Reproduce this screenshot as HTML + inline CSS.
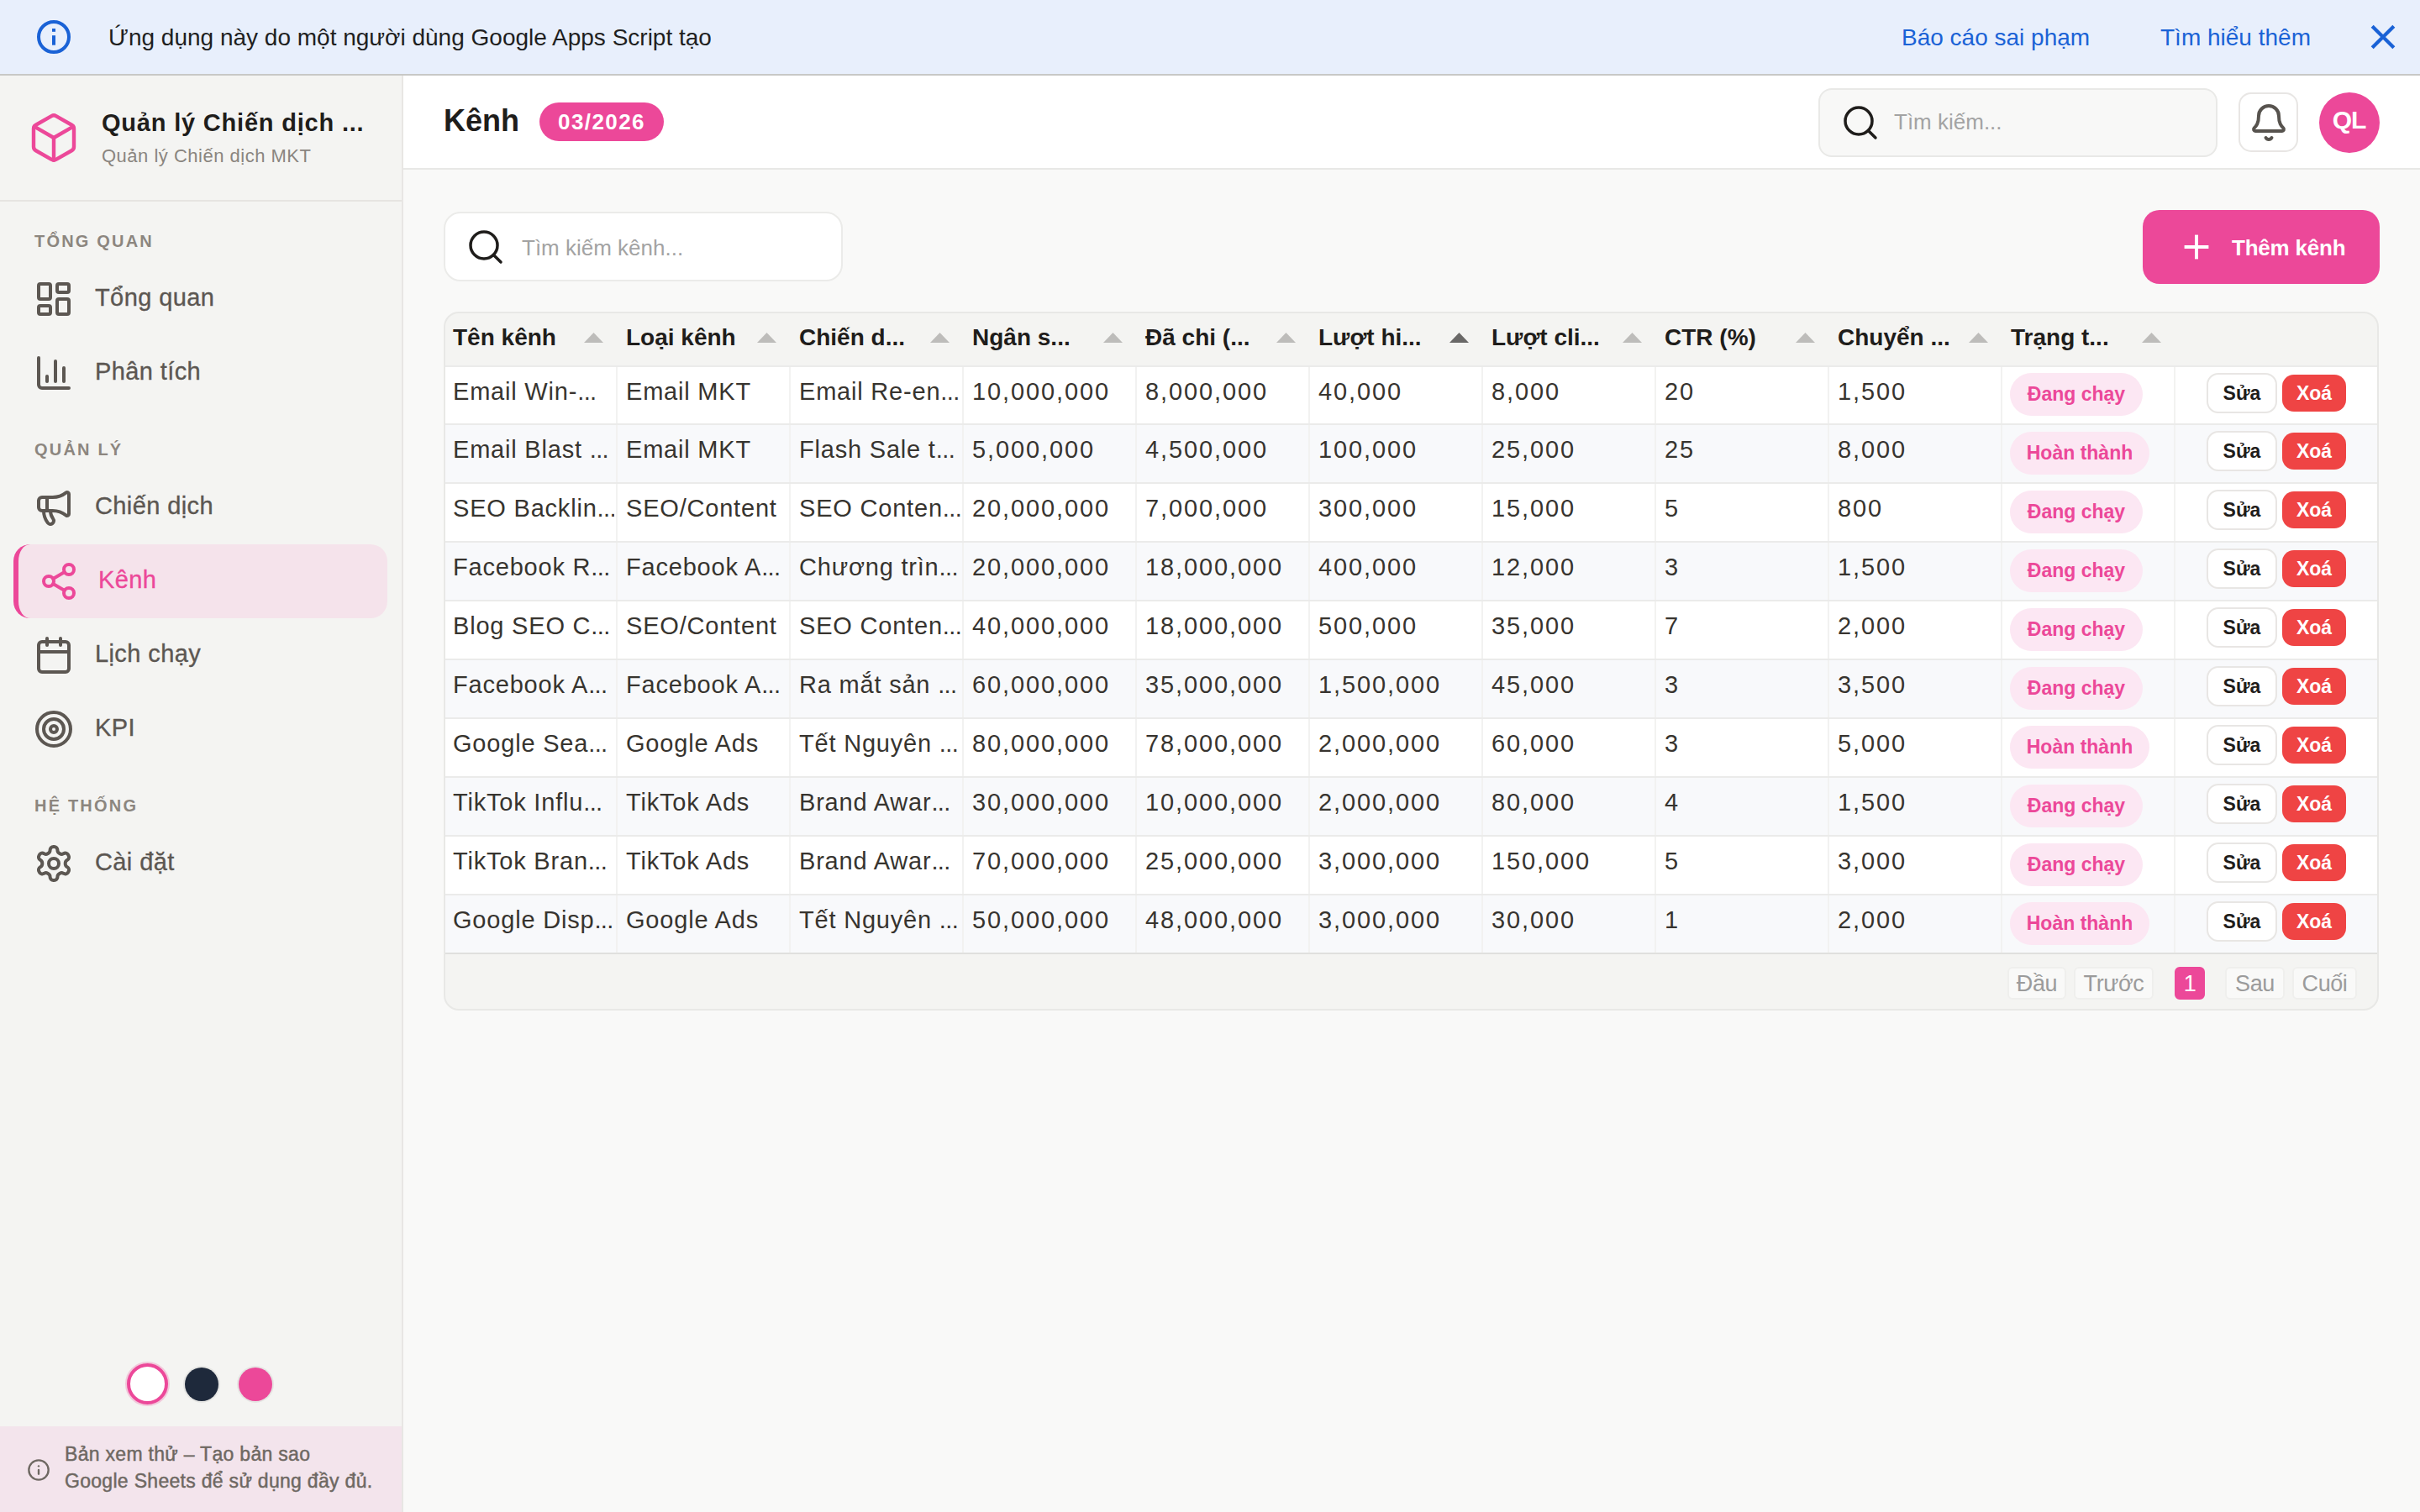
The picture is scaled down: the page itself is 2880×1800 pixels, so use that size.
<!DOCTYPE html>
<html><head><meta charset="utf-8"><title>Kênh</title><style>
*{box-sizing:border-box;margin:0;padding:0}
html,body{width:2880px;height:1800px;overflow:hidden;background:#f9f9f8;font-family:"Liberation Sans",sans-serif}
body{position:relative}
@media (max-width:2000px){html{zoom:0.5}}
.abs{position:absolute}
svg{display:block}
.t{position:absolute;white-space:nowrap}
#banner{position:absolute;left:0;top:0;width:2880px;height:90px;background:#e8effc;border-bottom:2px solid #c8c8c6}
#side{position:absolute;left:0;top:90px;width:480px;height:1710px;background:#f4f4f2;border-right:2px solid #e8e6e4}
#header{position:absolute;left:480px;top:90px;width:2400px;height:112px;background:#fff;border-bottom:2px solid #e8e8e6}
.sec{font-size:20px;line-height:24px;font-weight:700;letter-spacing:2.2px;color:#8c867f}
.navt{font-size:29px;line-height:36px;letter-spacing:0.4px;color:#5c5752;-webkit-text-stroke:0.35px #5c5752}
.th{font-size:28px;line-height:36px;font-weight:700;color:#1f1d1b}
.td{font-size:29px;line-height:36px;letter-spacing:0.8px;color:#37342f}
.el{letter-spacing:-0.6px}
.pill{position:absolute;height:51px;border-radius:26px;background:#fce7f3;color:#ec4899;font-size:23px;font-weight:700;line-height:51px;text-align:center;white-space:nowrap}
.btn-e{position:absolute;height:48px;border:2px solid #e8e6e4;border-radius:14px;background:#fff;color:#1f1d1b;font-size:23px;font-weight:700;line-height:44px;text-align:center}
.btn-d{position:absolute;height:44px;border-radius:14px;background:#ef4444;color:#fff;font-size:23px;font-weight:700;line-height:44px;text-align:center}
.pg{position:absolute;top:1151px;height:39px;border:2px solid #efefed;border-radius:6px;background:#f9f9f8;color:#9b9b9b;font-size:27px;letter-spacing:-0.4px;line-height:37px;text-align:center}
</style></head><body>
<div id="banner"></div>
<svg class="abs" style="left:40px;top:20px" width="48" height="48" viewBox="0 0 24 24" fill="none" stroke="#1a62d6" stroke-width="2"><circle cx="12" cy="12" r="9"/><rect x="11" y="11.1" width="2" height="5.75" fill="#1a62d6" stroke="none"/><rect x="11" y="7" width="2" height="1.9" fill="#1a62d6" stroke="none"/></svg>
<div class="t" style="left:129px;top:25.1px;font-size:28px;line-height:40px;color:#1f1f1f">Ứng dụng này do một người dùng Google Apps Script tạo</div>
<div class="t" style="left:2263px;top:25.1px;font-size:28px;line-height:40px;color:#1a62d6">Báo cáo sai phạm</div>
<div class="t" style="left:2571px;top:25.1px;font-size:28px;line-height:40px;color:#1a62d6">Tìm hiểu thêm</div>
<svg class="abs" style="left:2814px;top:22px" width="44" height="44" viewBox="0 0 24 24" fill="none" stroke="#1a62d6" stroke-width="2.3"><path d="M5 5l14 14M19 5L5 19"/></svg>
<div id="side"></div>
<svg class="abs" style="left:32px;top:132px" width="64" height="64" viewBox="0 0 24 24" fill="none" stroke="#ec4899" stroke-width="1.65" stroke-linecap="round" stroke-linejoin="round"><path d="M21 8a2 2 0 0 0-1-1.73l-7-4a2 2 0 0 0-2 0l-7 4A2 2 0 0 0 3 8v8a2 2 0 0 0 1 1.73l7 4a2 2 0 0 0 2 0l7-4A2 2 0 0 0 21 16Z"/><path d="m3.3 7 8.7 5 8.7-5"/><path d="M12 22V12"/></svg>
<div class="t" style="left:121px;top:127.5px;font-size:29px;line-height:36px;font-weight:700;letter-spacing:0.8px;color:#1f1d1b">Quản lý Chiến dịch ...</div>
<div class="t" style="left:121px;top:172.4px;font-size:22px;line-height:28px;letter-spacing:0.5px;color:#8a857f">Quản lý Chiến dịch MKT</div>
<div class="abs" style="left:0;top:238px;width:478px;height:2px;background:#e6e4e1"></div>
<div class="t sec" style="left:41px;top:275.1px">TỔNG QUAN</div>
<div class="t sec" style="left:41px;top:523.1px">QUẢN LÝ</div>
<div class="t sec" style="left:41px;top:947.1px">HỆ THỐNG</div>
<svg class="abs" style="left:40px;top:332px" width="48" height="48" viewBox="0 0 24 24" fill="none" stroke="#5c5752" stroke-width="2" stroke-linecap="round" stroke-linejoin="round"><rect width="7" height="9" x="3" y="3" rx="1"/><rect width="7" height="5" x="14" y="3" rx="1"/><rect width="7" height="9" x="14" y="12" rx="1"/><rect width="7" height="5" x="3" y="16" rx="1"/></svg>
<div class="t navt" style="left:113px;top:336.0px">Tổng quan</div>
<svg class="abs" style="left:40px;top:420px" width="48" height="48" viewBox="0 0 24 24" fill="none" stroke="#5c5752" stroke-width="2" stroke-linecap="round" stroke-linejoin="round"><path d="M3 3v16a2 2 0 0 0 2 2h16"/><path d="M18 17V9"/><path d="M13 17V5"/><path d="M8 17v-3"/></svg>
<div class="t navt" style="left:113px;top:424.0px">Phân tích</div>
<svg class="abs" style="left:40px;top:580px" width="48" height="48" viewBox="0 0 24 24" fill="none" stroke="#5c5752" stroke-width="2" stroke-linecap="round" stroke-linejoin="round"><path d="M11 6a13 13 0 0 0 8.4-2.8A1 1 0 0 1 21 4v12a1 1 0 0 1-1.6.8A13 13 0 0 0 11 14H5a2 2 0 0 1-2-2V8a2 2 0 0 1 2-2z"/><path d="M6 14a12 12 0 0 0 2.4 7.2 2 2 0 0 0 3.2-2.4A8 8 0 0 1 10 14"/><path d="M8 6v8"/></svg>
<div class="t navt" style="left:113px;top:584.0px">Chiến dịch</div>
<div class="abs" style="left:16px;top:648px;width:445px;height:88px;background:#f5e3eb;border-radius:20px;border-left:6px solid #ec4899"></div>
<svg class="abs" style="left:46px;top:668px" width="48" height="48" viewBox="0 0 24 24" fill="none" stroke="#ec4899" stroke-width="2" stroke-linecap="round" stroke-linejoin="round"><circle cx="18" cy="5" r="3"/><circle cx="6" cy="12" r="3"/><circle cx="18" cy="19" r="3"/><line x1="8.59" x2="15.42" y1="13.51" y2="17.49"/><line x1="15.41" x2="8.59" y1="6.51" y2="10.49"/></svg>
<div class="t navt" style="left:117px;top:672.0px;color:#ec4899;-webkit-text-stroke:0.35px #ec4899">Kênh</div>
<svg class="abs" style="left:40px;top:756px" width="48" height="48" viewBox="0 0 24 24" fill="none" stroke="#5c5752" stroke-width="2" stroke-linecap="round" stroke-linejoin="round"><path d="M8 2v4"/><path d="M16 2v4"/><rect width="18" height="18" x="3" y="4" rx="2"/><path d="M3 10h18"/></svg>
<div class="t navt" style="left:113px;top:760.0px">Lịch chạy</div>
<svg class="abs" style="left:40px;top:844px" width="48" height="48" viewBox="0 0 24 24" fill="none" stroke="#5c5752" stroke-width="2" stroke-linecap="round" stroke-linejoin="round"><circle cx="12" cy="12" r="10"/><circle cx="12" cy="12" r="6"/><circle cx="12" cy="12" r="2"/></svg>
<div class="t navt" style="left:113px;top:848.0px">KPI</div>
<svg class="abs" style="left:40px;top:1004px" width="48" height="48" viewBox="0 0 24 24" fill="none" stroke="#5c5752" stroke-width="2" stroke-linecap="round" stroke-linejoin="round"><path d="M12.22 2h-.44a2 2 0 0 0-2 2v.18a2 2 0 0 1-1 1.73l-.43.25a2 2 0 0 1-2 0l-.15-.08a2 2 0 0 0-2.73.73l-.22.38a2 2 0 0 0 .73 2.73l.15.1a2 2 0 0 1 1 1.72v.51a2 2 0 0 1-1 1.74l-.15.09a2 2 0 0 0-.73 2.730l.22.38a2 2 0 0 0 2.73.73l.15-.08a2 2 0 0 1 2 0l.43.25a2 2 0 0 1 1 1.73V20a2 2 0 0 0 2 2h.44a2 2 0 0 0 2-2v-.18a2 2 0 0 1 1-1.73l.43-.25a2 2 0 0 1 2 0l.15.08a2 2 0 0 0 2.73-.73l.22-.39a2 2 0 0 0-.73-2.73l-.15-.08a2 2 0 0 1-1-1.74v-.5a2 2 0 0 1 1-1.74l.15-.09a2 2 0 0 0 .73-2.73l-.22-.38a2 2 0 0 0-2.73-.73l-.15.08a2 2 0 0 1-2 0l-.43-.25a2 2 0 0 1-1-1.73V4a2 2 0 0 0-2-2z"/><circle cx="12" cy="12" r="3"/></svg>
<div class="t navt" style="left:113px;top:1008.0px">Cài đặt</div>
<div class="abs" style="left:151px;top:1623px;width:49px;height:49px;border-radius:50%;background:#fff;border:4px solid #ec4899;box-shadow:0 0 0 2px rgba(236,72,153,0.25)"></div>
<div class="abs" style="left:220px;top:1628px;width:40px;height:40px;border-radius:50%;background:#1e293b;box-shadow:0 0 0 2px rgba(0,0,0,0.06)"></div>
<div class="abs" style="left:284px;top:1628px;width:40px;height:40px;border-radius:50%;background:#ec4899;box-shadow:0 0 0 2px rgba(0,0,0,0.06)"></div>
<div class="abs" style="left:0;top:1698px;width:478px;height:102px;background:#f3e4ec"></div>
<svg class="abs" style="left:32px;top:1736px" width="28" height="28" viewBox="0 0 24 24" fill="none" stroke="#6e6862" stroke-width="2" stroke-linecap="round" stroke-linejoin="round"><circle cx="12" cy="12" r="10"/><path d="M12 16v-4"/><path d="M12 8h.01"/></svg>
<div class="t" style="left:77px;top:1715.4px;font-size:23px;line-height:32px;letter-spacing:0.3px;color:#6e6862;-webkit-text-stroke:0.45px #6e6862">Bản xem thử – Tạo bản sao<br>Google Sheets để sử dụng đầy đủ.</div>
<div id="header"></div>
<div class="t" style="left:528px;top:121.8px;font-size:36px;line-height:44px;font-weight:700;color:#1f1d1b">Kênh</div>
<div class="abs" style="left:642px;top:122px;width:148px;height:46px;border-radius:23px;background:#ec4899"></div>
<div class="t" style="left:642px;width:148px;text-align:center;top:128.7px;font-size:26px;line-height:32px;font-weight:700;letter-spacing:1.4px;color:#fff">03/2026</div>
<div class="abs" style="left:2164px;top:105px;width:475px;height:82px;border-radius:16px;background:#f8f8f7;border:2px solid #e9e9e7"></div>
<svg class="abs" style="left:2190px;top:122px" width="48" height="48" viewBox="0 0 24 24" fill="none" stroke="#1f1d1b" stroke-width="1.75" stroke-linecap="round" stroke-linejoin="round"><circle cx="11" cy="11" r="8"/><path d="m21 21-4.3-4.3"/></svg>
<div class="t" style="left:2254px;top:129.0px;font-size:26px;line-height:32px;color:#a3a3a3">Tìm kiếm...</div>
<div class="abs" style="left:2664px;top:110px;width:71px;height:71px;border-radius:15px;background:#fff;border:2px solid #e8e6e4"></div>
<svg class="abs" style="left:2676px;top:122px" width="48" height="48" viewBox="0 0 24 24" fill="none" stroke="#57534e" stroke-width="2" stroke-linecap="round" stroke-linejoin="round"><path d="M10.268 21a2 2 0 0 0 3.464 0"/><path d="M3.262 15.326A1 1 0 0 0 4 17h16a1 1 0 0 0 .74-1.673C19.41 13.956 18 12.499 18 8A6 6 0 0 0 6 8c0 4.499-1.411 5.956-2.738 7.326"/></svg>
<div class="abs" style="left:2760px;top:110px;width:72px;height:72px;border-radius:50%;background:#ec4899"></div>
<div class="t" style="left:2760px;width:72px;text-align:center;top:126.8px;font-size:30px;line-height:32px;font-weight:700;letter-spacing:-1px;text-indent:-1px;color:#fff">QL</div>
<div class="abs" style="left:528px;top:252px;width:475px;height:83px;border-radius:20px;background:#fff;border:2px solid #ebebe9"></div>
<svg class="abs" style="left:554px;top:270px" width="48" height="48" viewBox="0 0 24 24" fill="none" stroke="#1f1d1b" stroke-width="1.75" stroke-linecap="round" stroke-linejoin="round"><circle cx="11" cy="11" r="8"/><path d="m21 21-4.3-4.3"/></svg>
<div class="t" style="left:621px;top:278.7px;font-size:26px;line-height:32px;color:#a3a3a3">Tìm kiếm kênh...</div>
<div class="abs" style="left:2550px;top:250px;width:282px;height:88px;border-radius:20px;background:#ec4899"></div>
<svg class="abs" style="left:2590px;top:270px" width="48" height="48" viewBox="0 0 24 24" fill="none" stroke="#fff" stroke-width="2"><path d="M4.8 12h14.4"/><path d="M12 4.8v14.4"/></svg>
<div class="t" style="left:2656px;top:278.7px;font-size:26px;line-height:32px;font-weight:700;letter-spacing:-0.2px;color:#fff">Thêm kênh</div>
<div class="abs" style="left:528px;top:371px;width:2303px;height:832px;border-radius:18px;background:#f4f4f2;border:2px solid #e8e8e6;overflow:hidden">
<div class="t th" style="left:9.0px;top:11.4px">Tên kênh</div>
<svg class="abs" style="left:164.5px;top:23px" width="23" height="12" viewBox="0 0 23 12"><path d="M11.5 0L23 12H0z" fill="#bdbcba"/></svg>
<div class="t th" style="left:215.0px;top:11.4px">Loại kênh</div>
<svg class="abs" style="left:370.5px;top:23px" width="23" height="12" viewBox="0 0 23 12"><path d="M11.5 0L23 12H0z" fill="#bdbcba"/></svg>
<div class="t th" style="left:421.0px;top:11.4px">Chiến d...</div>
<svg class="abs" style="left:576.5px;top:23px" width="23" height="12" viewBox="0 0 23 12"><path d="M11.5 0L23 12H0z" fill="#bdbcba"/></svg>
<div class="t th" style="left:627.0px;top:11.4px">Ngân s...</div>
<svg class="abs" style="left:782.5px;top:23px" width="23" height="12" viewBox="0 0 23 12"><path d="M11.5 0L23 12H0z" fill="#bdbcba"/></svg>
<div class="t th" style="left:833.0px;top:11.4px">Đã chi (...</div>
<svg class="abs" style="left:988.5px;top:23px" width="23" height="12" viewBox="0 0 23 12"><path d="M11.5 0L23 12H0z" fill="#bdbcba"/></svg>
<div class="t th" style="left:1039.0px;top:11.4px">Lượt hi...</div>
<svg class="abs" style="left:1194.5px;top:23px" width="23" height="12" viewBox="0 0 23 12"><path d="M11.5 0L23 12H0z" fill="#696867"/></svg>
<div class="t th" style="left:1245.0px;top:11.4px">Lượt cli...</div>
<svg class="abs" style="left:1400.5px;top:23px" width="23" height="12" viewBox="0 0 23 12"><path d="M11.5 0L23 12H0z" fill="#bdbcba"/></svg>
<div class="t th" style="left:1451.0px;top:11.4px">CTR (%)</div>
<svg class="abs" style="left:1606.5px;top:23px" width="23" height="12" viewBox="0 0 23 12"><path d="M11.5 0L23 12H0z" fill="#bdbcba"/></svg>
<div class="t th" style="left:1657.0px;top:11.4px">Chuyển ...</div>
<svg class="abs" style="left:1812.5px;top:23px" width="23" height="12" viewBox="0 0 23 12"><path d="M11.5 0L23 12H0z" fill="#bdbcba"/></svg>
<div class="t th" style="left:1863.0px;top:11.4px">Trạng t...</div>
<svg class="abs" style="left:2018.5px;top:23px" width="23" height="12" viewBox="0 0 23 12"><path d="M11.5 0L23 12H0z" fill="#bdbcba"/></svg>
<div class="abs" style="left:0;top:61.50px;width:2299px;height:69.94px;background:#ffffff;border-top:2px solid #ebebea"></div>
<div class="t td" style="left:9.0px;top:74.5px;width:192.0px;overflow:hidden;">Email Win-<span class=el>...</span></div>
<div class="abs" style="left:203.0px;top:63.50px;width:2px;height:67.94px;background:#f2f2f1"></div>
<div class="t td" style="left:215.0px;top:74.5px;width:192.0px;overflow:hidden;">Email MKT</div>
<div class="abs" style="left:409.0px;top:63.50px;width:2px;height:67.94px;background:#f2f2f1"></div>
<div class="t td" style="left:421.0px;top:74.5px;width:192.0px;overflow:hidden;">Email Re-en<span class=el>...</span></div>
<div class="abs" style="left:615.0px;top:63.50px;width:2px;height:67.94px;background:#f2f2f1"></div>
<div class="t td" style="left:627.0px;top:74.5px;width:192.0px;overflow:hidden;letter-spacing:1.9px;">10,000,000</div>
<div class="abs" style="left:821.0px;top:63.50px;width:2px;height:67.94px;background:#f2f2f1"></div>
<div class="t td" style="left:833.0px;top:74.5px;width:192.0px;overflow:hidden;letter-spacing:1.9px;">8,000,000</div>
<div class="abs" style="left:1027.0px;top:63.50px;width:2px;height:67.94px;background:#f2f2f1"></div>
<div class="t td" style="left:1039.0px;top:74.5px;width:192.0px;overflow:hidden;letter-spacing:1.9px;">40,000</div>
<div class="abs" style="left:1233.0px;top:63.50px;width:2px;height:67.94px;background:#f2f2f1"></div>
<div class="t td" style="left:1245.0px;top:74.5px;width:192.0px;overflow:hidden;letter-spacing:1.9px;">8,000</div>
<div class="abs" style="left:1439.0px;top:63.50px;width:2px;height:67.94px;background:#f2f2f1"></div>
<div class="t td" style="left:1451.0px;top:74.5px;width:192.0px;overflow:hidden;letter-spacing:1.9px;">20</div>
<div class="abs" style="left:1645.0px;top:63.50px;width:2px;height:67.94px;background:#f2f2f1"></div>
<div class="t td" style="left:1657.0px;top:74.5px;width:192.0px;overflow:hidden;letter-spacing:1.9px;">1,500</div>
<div class="abs" style="left:1851.0px;top:63.50px;width:2px;height:67.94px;background:#f2f2f1"></div>
<div class="abs" style="left:2057.0px;top:63.50px;width:2px;height:67.94px;background:#f2f2f1"></div>
<div class="pill" style="left:1862.0px;top:71.0px;width:158px">Đang chạy</div>
<div class="btn-e" style="left:2096px;top:70.5px;width:84px">Sửa</div>
<div class="btn-d" style="left:2186px;top:72.5px;width:76px">Xoá</div>
<div class="abs" style="left:0;top:131.44px;width:2299px;height:69.94px;background:#f8f9fb;border-top:2px solid #ebebea"></div>
<div class="t td" style="left:9.0px;top:144.4px;width:192.0px;overflow:hidden;">Email Blast <span class=el>...</span></div>
<div class="abs" style="left:203.0px;top:133.44px;width:2px;height:67.94px;background:#f2f2f1"></div>
<div class="t td" style="left:215.0px;top:144.4px;width:192.0px;overflow:hidden;">Email MKT</div>
<div class="abs" style="left:409.0px;top:133.44px;width:2px;height:67.94px;background:#f2f2f1"></div>
<div class="t td" style="left:421.0px;top:144.4px;width:192.0px;overflow:hidden;">Flash Sale t<span class=el>...</span></div>
<div class="abs" style="left:615.0px;top:133.44px;width:2px;height:67.94px;background:#f2f2f1"></div>
<div class="t td" style="left:627.0px;top:144.4px;width:192.0px;overflow:hidden;letter-spacing:1.9px;">5,000,000</div>
<div class="abs" style="left:821.0px;top:133.44px;width:2px;height:67.94px;background:#f2f2f1"></div>
<div class="t td" style="left:833.0px;top:144.4px;width:192.0px;overflow:hidden;letter-spacing:1.9px;">4,500,000</div>
<div class="abs" style="left:1027.0px;top:133.44px;width:2px;height:67.94px;background:#f2f2f1"></div>
<div class="t td" style="left:1039.0px;top:144.4px;width:192.0px;overflow:hidden;letter-spacing:1.9px;">100,000</div>
<div class="abs" style="left:1233.0px;top:133.44px;width:2px;height:67.94px;background:#f2f2f1"></div>
<div class="t td" style="left:1245.0px;top:144.4px;width:192.0px;overflow:hidden;letter-spacing:1.9px;">25,000</div>
<div class="abs" style="left:1439.0px;top:133.44px;width:2px;height:67.94px;background:#f2f2f1"></div>
<div class="t td" style="left:1451.0px;top:144.4px;width:192.0px;overflow:hidden;letter-spacing:1.9px;">25</div>
<div class="abs" style="left:1645.0px;top:133.44px;width:2px;height:67.94px;background:#f2f2f1"></div>
<div class="t td" style="left:1657.0px;top:144.4px;width:192.0px;overflow:hidden;letter-spacing:1.9px;">8,000</div>
<div class="abs" style="left:1851.0px;top:133.44px;width:2px;height:67.94px;background:#f2f2f1"></div>
<div class="abs" style="left:2057.0px;top:133.44px;width:2px;height:67.94px;background:#f2f2f1"></div>
<div class="pill" style="left:1862.0px;top:140.9px;width:166px">Hoàn thành</div>
<div class="btn-e" style="left:2096px;top:140.4px;width:84px">Sửa</div>
<div class="btn-d" style="left:2186px;top:142.4px;width:76px">Xoá</div>
<div class="abs" style="left:0;top:201.38px;width:2299px;height:69.94px;background:#ffffff;border-top:2px solid #ebebea"></div>
<div class="t td" style="left:9.0px;top:214.3px;width:192.0px;overflow:hidden;">SEO Backlin<span class=el>...</span></div>
<div class="abs" style="left:203.0px;top:203.38px;width:2px;height:67.94px;background:#f2f2f1"></div>
<div class="t td" style="left:215.0px;top:214.3px;width:192.0px;overflow:hidden;">SEO/Content</div>
<div class="abs" style="left:409.0px;top:203.38px;width:2px;height:67.94px;background:#f2f2f1"></div>
<div class="t td" style="left:421.0px;top:214.3px;width:192.0px;overflow:hidden;">SEO Conten<span class=el>...</span></div>
<div class="abs" style="left:615.0px;top:203.38px;width:2px;height:67.94px;background:#f2f2f1"></div>
<div class="t td" style="left:627.0px;top:214.3px;width:192.0px;overflow:hidden;letter-spacing:1.9px;">20,000,000</div>
<div class="abs" style="left:821.0px;top:203.38px;width:2px;height:67.94px;background:#f2f2f1"></div>
<div class="t td" style="left:833.0px;top:214.3px;width:192.0px;overflow:hidden;letter-spacing:1.9px;">7,000,000</div>
<div class="abs" style="left:1027.0px;top:203.38px;width:2px;height:67.94px;background:#f2f2f1"></div>
<div class="t td" style="left:1039.0px;top:214.3px;width:192.0px;overflow:hidden;letter-spacing:1.9px;">300,000</div>
<div class="abs" style="left:1233.0px;top:203.38px;width:2px;height:67.94px;background:#f2f2f1"></div>
<div class="t td" style="left:1245.0px;top:214.3px;width:192.0px;overflow:hidden;letter-spacing:1.9px;">15,000</div>
<div class="abs" style="left:1439.0px;top:203.38px;width:2px;height:67.94px;background:#f2f2f1"></div>
<div class="t td" style="left:1451.0px;top:214.3px;width:192.0px;overflow:hidden;letter-spacing:1.9px;">5</div>
<div class="abs" style="left:1645.0px;top:203.38px;width:2px;height:67.94px;background:#f2f2f1"></div>
<div class="t td" style="left:1657.0px;top:214.3px;width:192.0px;overflow:hidden;letter-spacing:1.9px;">800</div>
<div class="abs" style="left:1851.0px;top:203.38px;width:2px;height:67.94px;background:#f2f2f1"></div>
<div class="abs" style="left:2057.0px;top:203.38px;width:2px;height:67.94px;background:#f2f2f1"></div>
<div class="pill" style="left:1862.0px;top:210.9px;width:158px">Đang chạy</div>
<div class="btn-e" style="left:2096px;top:210.4px;width:84px">Sửa</div>
<div class="btn-d" style="left:2186px;top:212.4px;width:76px">Xoá</div>
<div class="abs" style="left:0;top:271.32px;width:2299px;height:69.94px;background:#f8f9fb;border-top:2px solid #ebebea"></div>
<div class="t td" style="left:9.0px;top:284.3px;width:192.0px;overflow:hidden;">Facebook R<span class=el>...</span></div>
<div class="abs" style="left:203.0px;top:273.32px;width:2px;height:67.94px;background:#f2f2f1"></div>
<div class="t td" style="left:215.0px;top:284.3px;width:192.0px;overflow:hidden;">Facebook A<span class=el>...</span></div>
<div class="abs" style="left:409.0px;top:273.32px;width:2px;height:67.94px;background:#f2f2f1"></div>
<div class="t td" style="left:421.0px;top:284.3px;width:192.0px;overflow:hidden;">Chương trìn<span class=el>...</span></div>
<div class="abs" style="left:615.0px;top:273.32px;width:2px;height:67.94px;background:#f2f2f1"></div>
<div class="t td" style="left:627.0px;top:284.3px;width:192.0px;overflow:hidden;letter-spacing:1.9px;">20,000,000</div>
<div class="abs" style="left:821.0px;top:273.32px;width:2px;height:67.94px;background:#f2f2f1"></div>
<div class="t td" style="left:833.0px;top:284.3px;width:192.0px;overflow:hidden;letter-spacing:1.9px;">18,000,000</div>
<div class="abs" style="left:1027.0px;top:273.32px;width:2px;height:67.94px;background:#f2f2f1"></div>
<div class="t td" style="left:1039.0px;top:284.3px;width:192.0px;overflow:hidden;letter-spacing:1.9px;">400,000</div>
<div class="abs" style="left:1233.0px;top:273.32px;width:2px;height:67.94px;background:#f2f2f1"></div>
<div class="t td" style="left:1245.0px;top:284.3px;width:192.0px;overflow:hidden;letter-spacing:1.9px;">12,000</div>
<div class="abs" style="left:1439.0px;top:273.32px;width:2px;height:67.94px;background:#f2f2f1"></div>
<div class="t td" style="left:1451.0px;top:284.3px;width:192.0px;overflow:hidden;letter-spacing:1.9px;">3</div>
<div class="abs" style="left:1645.0px;top:273.32px;width:2px;height:67.94px;background:#f2f2f1"></div>
<div class="t td" style="left:1657.0px;top:284.3px;width:192.0px;overflow:hidden;letter-spacing:1.9px;">1,500</div>
<div class="abs" style="left:1851.0px;top:273.32px;width:2px;height:67.94px;background:#f2f2f1"></div>
<div class="abs" style="left:2057.0px;top:273.32px;width:2px;height:67.94px;background:#f2f2f1"></div>
<div class="pill" style="left:1862.0px;top:280.8px;width:158px">Đang chạy</div>
<div class="btn-e" style="left:2096px;top:280.3px;width:84px">Sửa</div>
<div class="btn-d" style="left:2186px;top:282.3px;width:76px">Xoá</div>
<div class="abs" style="left:0;top:341.26px;width:2299px;height:69.94px;background:#ffffff;border-top:2px solid #ebebea"></div>
<div class="t td" style="left:9.0px;top:354.2px;width:192.0px;overflow:hidden;">Blog SEO C<span class=el>...</span></div>
<div class="abs" style="left:203.0px;top:343.26px;width:2px;height:67.94px;background:#f2f2f1"></div>
<div class="t td" style="left:215.0px;top:354.2px;width:192.0px;overflow:hidden;">SEO/Content</div>
<div class="abs" style="left:409.0px;top:343.26px;width:2px;height:67.94px;background:#f2f2f1"></div>
<div class="t td" style="left:421.0px;top:354.2px;width:192.0px;overflow:hidden;">SEO Conten<span class=el>...</span></div>
<div class="abs" style="left:615.0px;top:343.26px;width:2px;height:67.94px;background:#f2f2f1"></div>
<div class="t td" style="left:627.0px;top:354.2px;width:192.0px;overflow:hidden;letter-spacing:1.9px;">40,000,000</div>
<div class="abs" style="left:821.0px;top:343.26px;width:2px;height:67.94px;background:#f2f2f1"></div>
<div class="t td" style="left:833.0px;top:354.2px;width:192.0px;overflow:hidden;letter-spacing:1.9px;">18,000,000</div>
<div class="abs" style="left:1027.0px;top:343.26px;width:2px;height:67.94px;background:#f2f2f1"></div>
<div class="t td" style="left:1039.0px;top:354.2px;width:192.0px;overflow:hidden;letter-spacing:1.9px;">500,000</div>
<div class="abs" style="left:1233.0px;top:343.26px;width:2px;height:67.94px;background:#f2f2f1"></div>
<div class="t td" style="left:1245.0px;top:354.2px;width:192.0px;overflow:hidden;letter-spacing:1.9px;">35,000</div>
<div class="abs" style="left:1439.0px;top:343.26px;width:2px;height:67.94px;background:#f2f2f1"></div>
<div class="t td" style="left:1451.0px;top:354.2px;width:192.0px;overflow:hidden;letter-spacing:1.9px;">7</div>
<div class="abs" style="left:1645.0px;top:343.26px;width:2px;height:67.94px;background:#f2f2f1"></div>
<div class="t td" style="left:1657.0px;top:354.2px;width:192.0px;overflow:hidden;letter-spacing:1.9px;">2,000</div>
<div class="abs" style="left:1851.0px;top:343.26px;width:2px;height:67.94px;background:#f2f2f1"></div>
<div class="abs" style="left:2057.0px;top:343.26px;width:2px;height:67.94px;background:#f2f2f1"></div>
<div class="pill" style="left:1862.0px;top:350.8px;width:158px">Đang chạy</div>
<div class="btn-e" style="left:2096px;top:350.3px;width:84px">Sửa</div>
<div class="btn-d" style="left:2186px;top:352.3px;width:76px">Xoá</div>
<div class="abs" style="left:0;top:411.20px;width:2299px;height:69.94px;background:#f8f9fb;border-top:2px solid #ebebea"></div>
<div class="t td" style="left:9.0px;top:424.2px;width:192.0px;overflow:hidden;">Facebook A<span class=el>...</span></div>
<div class="abs" style="left:203.0px;top:413.20px;width:2px;height:67.94px;background:#f2f2f1"></div>
<div class="t td" style="left:215.0px;top:424.2px;width:192.0px;overflow:hidden;">Facebook A<span class=el>...</span></div>
<div class="abs" style="left:409.0px;top:413.20px;width:2px;height:67.94px;background:#f2f2f1"></div>
<div class="t td" style="left:421.0px;top:424.2px;width:192.0px;overflow:hidden;">Ra mắt sản <span class=el>...</span></div>
<div class="abs" style="left:615.0px;top:413.20px;width:2px;height:67.94px;background:#f2f2f1"></div>
<div class="t td" style="left:627.0px;top:424.2px;width:192.0px;overflow:hidden;letter-spacing:1.9px;">60,000,000</div>
<div class="abs" style="left:821.0px;top:413.20px;width:2px;height:67.94px;background:#f2f2f1"></div>
<div class="t td" style="left:833.0px;top:424.2px;width:192.0px;overflow:hidden;letter-spacing:1.9px;">35,000,000</div>
<div class="abs" style="left:1027.0px;top:413.20px;width:2px;height:67.94px;background:#f2f2f1"></div>
<div class="t td" style="left:1039.0px;top:424.2px;width:192.0px;overflow:hidden;letter-spacing:1.9px;">1,500,000</div>
<div class="abs" style="left:1233.0px;top:413.20px;width:2px;height:67.94px;background:#f2f2f1"></div>
<div class="t td" style="left:1245.0px;top:424.2px;width:192.0px;overflow:hidden;letter-spacing:1.9px;">45,000</div>
<div class="abs" style="left:1439.0px;top:413.20px;width:2px;height:67.94px;background:#f2f2f1"></div>
<div class="t td" style="left:1451.0px;top:424.2px;width:192.0px;overflow:hidden;letter-spacing:1.9px;">3</div>
<div class="abs" style="left:1645.0px;top:413.20px;width:2px;height:67.94px;background:#f2f2f1"></div>
<div class="t td" style="left:1657.0px;top:424.2px;width:192.0px;overflow:hidden;letter-spacing:1.9px;">3,500</div>
<div class="abs" style="left:1851.0px;top:413.20px;width:2px;height:67.94px;background:#f2f2f1"></div>
<div class="abs" style="left:2057.0px;top:413.20px;width:2px;height:67.94px;background:#f2f2f1"></div>
<div class="pill" style="left:1862.0px;top:420.7px;width:158px">Đang chạy</div>
<div class="btn-e" style="left:2096px;top:420.2px;width:84px">Sửa</div>
<div class="btn-d" style="left:2186px;top:422.2px;width:76px">Xoá</div>
<div class="abs" style="left:0;top:481.14px;width:2299px;height:69.94px;background:#ffffff;border-top:2px solid #ebebea"></div>
<div class="t td" style="left:9.0px;top:494.1px;width:192.0px;overflow:hidden;">Google Sea<span class=el>...</span></div>
<div class="abs" style="left:203.0px;top:483.14px;width:2px;height:67.94px;background:#f2f2f1"></div>
<div class="t td" style="left:215.0px;top:494.1px;width:192.0px;overflow:hidden;">Google Ads</div>
<div class="abs" style="left:409.0px;top:483.14px;width:2px;height:67.94px;background:#f2f2f1"></div>
<div class="t td" style="left:421.0px;top:494.1px;width:192.0px;overflow:hidden;">Tết Nguyên <span class=el>...</span></div>
<div class="abs" style="left:615.0px;top:483.14px;width:2px;height:67.94px;background:#f2f2f1"></div>
<div class="t td" style="left:627.0px;top:494.1px;width:192.0px;overflow:hidden;letter-spacing:1.9px;">80,000,000</div>
<div class="abs" style="left:821.0px;top:483.14px;width:2px;height:67.94px;background:#f2f2f1"></div>
<div class="t td" style="left:833.0px;top:494.1px;width:192.0px;overflow:hidden;letter-spacing:1.9px;">78,000,000</div>
<div class="abs" style="left:1027.0px;top:483.14px;width:2px;height:67.94px;background:#f2f2f1"></div>
<div class="t td" style="left:1039.0px;top:494.1px;width:192.0px;overflow:hidden;letter-spacing:1.9px;">2,000,000</div>
<div class="abs" style="left:1233.0px;top:483.14px;width:2px;height:67.94px;background:#f2f2f1"></div>
<div class="t td" style="left:1245.0px;top:494.1px;width:192.0px;overflow:hidden;letter-spacing:1.9px;">60,000</div>
<div class="abs" style="left:1439.0px;top:483.14px;width:2px;height:67.94px;background:#f2f2f1"></div>
<div class="t td" style="left:1451.0px;top:494.1px;width:192.0px;overflow:hidden;letter-spacing:1.9px;">3</div>
<div class="abs" style="left:1645.0px;top:483.14px;width:2px;height:67.94px;background:#f2f2f1"></div>
<div class="t td" style="left:1657.0px;top:494.1px;width:192.0px;overflow:hidden;letter-spacing:1.9px;">5,000</div>
<div class="abs" style="left:1851.0px;top:483.14px;width:2px;height:67.94px;background:#f2f2f1"></div>
<div class="abs" style="left:2057.0px;top:483.14px;width:2px;height:67.94px;background:#f2f2f1"></div>
<div class="pill" style="left:1862.0px;top:490.6px;width:166px">Hoàn thành</div>
<div class="btn-e" style="left:2096px;top:490.1px;width:84px">Sửa</div>
<div class="btn-d" style="left:2186px;top:492.1px;width:76px">Xoá</div>
<div class="abs" style="left:0;top:551.08px;width:2299px;height:69.94px;background:#f8f9fb;border-top:2px solid #ebebea"></div>
<div class="t td" style="left:9.0px;top:564.0px;width:192.0px;overflow:hidden;">TikTok Influ<span class=el>...</span></div>
<div class="abs" style="left:203.0px;top:553.08px;width:2px;height:67.94px;background:#f2f2f1"></div>
<div class="t td" style="left:215.0px;top:564.0px;width:192.0px;overflow:hidden;">TikTok Ads</div>
<div class="abs" style="left:409.0px;top:553.08px;width:2px;height:67.94px;background:#f2f2f1"></div>
<div class="t td" style="left:421.0px;top:564.0px;width:192.0px;overflow:hidden;">Brand Awar<span class=el>...</span></div>
<div class="abs" style="left:615.0px;top:553.08px;width:2px;height:67.94px;background:#f2f2f1"></div>
<div class="t td" style="left:627.0px;top:564.0px;width:192.0px;overflow:hidden;letter-spacing:1.9px;">30,000,000</div>
<div class="abs" style="left:821.0px;top:553.08px;width:2px;height:67.94px;background:#f2f2f1"></div>
<div class="t td" style="left:833.0px;top:564.0px;width:192.0px;overflow:hidden;letter-spacing:1.9px;">10,000,000</div>
<div class="abs" style="left:1027.0px;top:553.08px;width:2px;height:67.94px;background:#f2f2f1"></div>
<div class="t td" style="left:1039.0px;top:564.0px;width:192.0px;overflow:hidden;letter-spacing:1.9px;">2,000,000</div>
<div class="abs" style="left:1233.0px;top:553.08px;width:2px;height:67.94px;background:#f2f2f1"></div>
<div class="t td" style="left:1245.0px;top:564.0px;width:192.0px;overflow:hidden;letter-spacing:1.9px;">80,000</div>
<div class="abs" style="left:1439.0px;top:553.08px;width:2px;height:67.94px;background:#f2f2f1"></div>
<div class="t td" style="left:1451.0px;top:564.0px;width:192.0px;overflow:hidden;letter-spacing:1.9px;">4</div>
<div class="abs" style="left:1645.0px;top:553.08px;width:2px;height:67.94px;background:#f2f2f1"></div>
<div class="t td" style="left:1657.0px;top:564.0px;width:192.0px;overflow:hidden;letter-spacing:1.9px;">1,500</div>
<div class="abs" style="left:1851.0px;top:553.08px;width:2px;height:67.94px;background:#f2f2f1"></div>
<div class="abs" style="left:2057.0px;top:553.08px;width:2px;height:67.94px;background:#f2f2f1"></div>
<div class="pill" style="left:1862.0px;top:560.6px;width:158px">Đang chạy</div>
<div class="btn-e" style="left:2096px;top:560.1px;width:84px">Sửa</div>
<div class="btn-d" style="left:2186px;top:562.1px;width:76px">Xoá</div>
<div class="abs" style="left:0;top:621.02px;width:2299px;height:69.94px;background:#ffffff;border-top:2px solid #ebebea"></div>
<div class="t td" style="left:9.0px;top:634.0px;width:192.0px;overflow:hidden;">TikTok Bran<span class=el>...</span></div>
<div class="abs" style="left:203.0px;top:623.02px;width:2px;height:67.94px;background:#f2f2f1"></div>
<div class="t td" style="left:215.0px;top:634.0px;width:192.0px;overflow:hidden;">TikTok Ads</div>
<div class="abs" style="left:409.0px;top:623.02px;width:2px;height:67.94px;background:#f2f2f1"></div>
<div class="t td" style="left:421.0px;top:634.0px;width:192.0px;overflow:hidden;">Brand Awar<span class=el>...</span></div>
<div class="abs" style="left:615.0px;top:623.02px;width:2px;height:67.94px;background:#f2f2f1"></div>
<div class="t td" style="left:627.0px;top:634.0px;width:192.0px;overflow:hidden;letter-spacing:1.9px;">70,000,000</div>
<div class="abs" style="left:821.0px;top:623.02px;width:2px;height:67.94px;background:#f2f2f1"></div>
<div class="t td" style="left:833.0px;top:634.0px;width:192.0px;overflow:hidden;letter-spacing:1.9px;">25,000,000</div>
<div class="abs" style="left:1027.0px;top:623.02px;width:2px;height:67.94px;background:#f2f2f1"></div>
<div class="t td" style="left:1039.0px;top:634.0px;width:192.0px;overflow:hidden;letter-spacing:1.9px;">3,000,000</div>
<div class="abs" style="left:1233.0px;top:623.02px;width:2px;height:67.94px;background:#f2f2f1"></div>
<div class="t td" style="left:1245.0px;top:634.0px;width:192.0px;overflow:hidden;letter-spacing:1.9px;">150,000</div>
<div class="abs" style="left:1439.0px;top:623.02px;width:2px;height:67.94px;background:#f2f2f1"></div>
<div class="t td" style="left:1451.0px;top:634.0px;width:192.0px;overflow:hidden;letter-spacing:1.9px;">5</div>
<div class="abs" style="left:1645.0px;top:623.02px;width:2px;height:67.94px;background:#f2f2f1"></div>
<div class="t td" style="left:1657.0px;top:634.0px;width:192.0px;overflow:hidden;letter-spacing:1.9px;">3,000</div>
<div class="abs" style="left:1851.0px;top:623.02px;width:2px;height:67.94px;background:#f2f2f1"></div>
<div class="abs" style="left:2057.0px;top:623.02px;width:2px;height:67.94px;background:#f2f2f1"></div>
<div class="pill" style="left:1862.0px;top:630.5px;width:158px">Đang chạy</div>
<div class="btn-e" style="left:2096px;top:630.0px;width:84px">Sửa</div>
<div class="btn-d" style="left:2186px;top:632.0px;width:76px">Xoá</div>
<div class="abs" style="left:0;top:690.96px;width:2299px;height:69.94px;background:#f8f9fb;border-top:2px solid #ebebea"></div>
<div class="t td" style="left:9.0px;top:703.9px;width:192.0px;overflow:hidden;">Google Disp<span class=el>...</span></div>
<div class="abs" style="left:203.0px;top:692.96px;width:2px;height:67.94px;background:#f2f2f1"></div>
<div class="t td" style="left:215.0px;top:703.9px;width:192.0px;overflow:hidden;">Google Ads</div>
<div class="abs" style="left:409.0px;top:692.96px;width:2px;height:67.94px;background:#f2f2f1"></div>
<div class="t td" style="left:421.0px;top:703.9px;width:192.0px;overflow:hidden;">Tết Nguyên <span class=el>...</span></div>
<div class="abs" style="left:615.0px;top:692.96px;width:2px;height:67.94px;background:#f2f2f1"></div>
<div class="t td" style="left:627.0px;top:703.9px;width:192.0px;overflow:hidden;letter-spacing:1.9px;">50,000,000</div>
<div class="abs" style="left:821.0px;top:692.96px;width:2px;height:67.94px;background:#f2f2f1"></div>
<div class="t td" style="left:833.0px;top:703.9px;width:192.0px;overflow:hidden;letter-spacing:1.9px;">48,000,000</div>
<div class="abs" style="left:1027.0px;top:692.96px;width:2px;height:67.94px;background:#f2f2f1"></div>
<div class="t td" style="left:1039.0px;top:703.9px;width:192.0px;overflow:hidden;letter-spacing:1.9px;">3,000,000</div>
<div class="abs" style="left:1233.0px;top:692.96px;width:2px;height:67.94px;background:#f2f2f1"></div>
<div class="t td" style="left:1245.0px;top:703.9px;width:192.0px;overflow:hidden;letter-spacing:1.9px;">30,000</div>
<div class="abs" style="left:1439.0px;top:692.96px;width:2px;height:67.94px;background:#f2f2f1"></div>
<div class="t td" style="left:1451.0px;top:703.9px;width:192.0px;overflow:hidden;letter-spacing:1.9px;">1</div>
<div class="abs" style="left:1645.0px;top:692.96px;width:2px;height:67.94px;background:#f2f2f1"></div>
<div class="t td" style="left:1657.0px;top:703.9px;width:192.0px;overflow:hidden;letter-spacing:1.9px;">2,000</div>
<div class="abs" style="left:1851.0px;top:692.96px;width:2px;height:67.94px;background:#f2f2f1"></div>
<div class="abs" style="left:2057.0px;top:692.96px;width:2px;height:67.94px;background:#f2f2f1"></div>
<div class="pill" style="left:1862.0px;top:700.5px;width:166px">Hoàn thành</div>
<div class="btn-e" style="left:2096px;top:700.0px;width:84px">Sửa</div>
<div class="btn-d" style="left:2186px;top:702.0px;width:76px">Xoá</div>
<div class="abs" style="left:0;top:760.90px;width:2299px;height:2px;background:#e0e0de"></div>
</div>
<div class="pg" style="left:2389px;width:70px">Đầu</div>
<div class="pg" style="left:2468px;width:95px">Trước</div>
<div class="pg" style="left:2588px;width:36px;background:#ec4899;border-color:#ec4899;color:#fff">1</div>
<div class="pg" style="left:2648px;width:71px">Sau</div>
<div class="pg" style="left:2728px;width:77px">Cuối</div>
</body></html>
